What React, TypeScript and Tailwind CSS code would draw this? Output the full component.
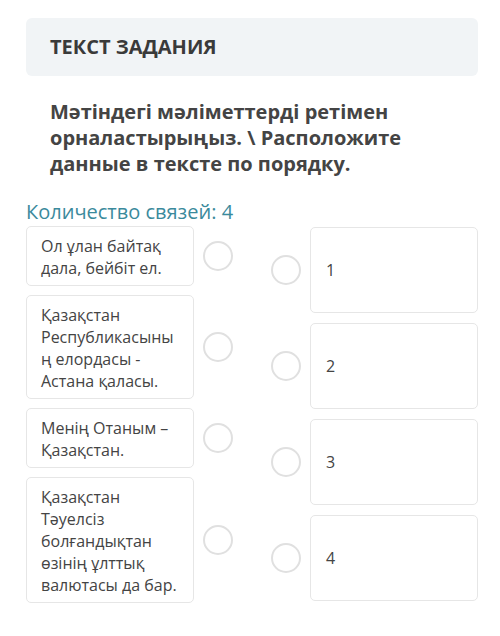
const leftItems = [
    'Ол ұлан байтақ дала, бейбіт ел.',
    'Қазақстан Республикасының елордасы - Астана қаласы.',
    'Менің Отаным – Қазақстан.',
    'Қазақстан Тәуелсіз болғандықтан өзінің ұлттық валютасы да бар.',
]

const rightItems = ['1', '2', '3', '4']

const Dot = () => (
    <div className="w-[30px] h-[30px] shrink-0 rounded-full border-2 border-[#e0e0e0] bg-white" />
)

export default function App() {
    return (
        <div className="min-h-[636px] bg-white pt-[18px] pl-[26px] pr-[22px] text-[#333] [font-family:'Open_Sans',sans-serif]">
            <div className="rounded-md bg-[#f1f4f6] px-6 h-[58px] flex items-center">
                <h2 className="text-[20px] font-bold text-[#3a3a3a]">ТЕКСТ ЗАДАНИЯ</h2>
            </div>

            <div className="px-6 pt-[23px] text-[20px] leading-[26px] font-bold text-[#444]">
                Мәтіндегі мәліметтерді ретімен орналастырыңыз. \ Расположите данные в тексте по порядку.
            </div>

            <div className="mt-[22px] text-[20px] leading-[26px] text-[#3b8a9c]">Количество связей: 4</div>

            <div className="mt-[1px] flex">
                <div className="flex flex-col gap-[9px] w-[207px]">
                    {leftItems.map((text, i) => (
                        <div key={i} className="flex items-center gap-[9px]">
                            <div className="w-[168px] rounded-[5px] border border-[#e6e6e6] pl-[14px] pr-[12px] pt-[8px] pb-[6px] text-[16px] leading-[22px] text-[#444] break-words">
                                {text}
                            </div>
                            <Dot />
                        </div>
                    ))}
                </div>
                <div className="ml-auto flex flex-col gap-[10px] pt-[1px]">
                    {rightItems.map((n) => (
                        <div key={n} className="flex items-center gap-[9px]">
                            <Dot />
                            <div className="w-[168px] h-[86px] rounded-[5px] border border-[#e6e6e6] px-[15px] flex items-center text-[16px] text-[#444]">
                                {n}
                            </div>
                        </div>
                    ))}
                </div>
            </div>
        </div>
    )
}
